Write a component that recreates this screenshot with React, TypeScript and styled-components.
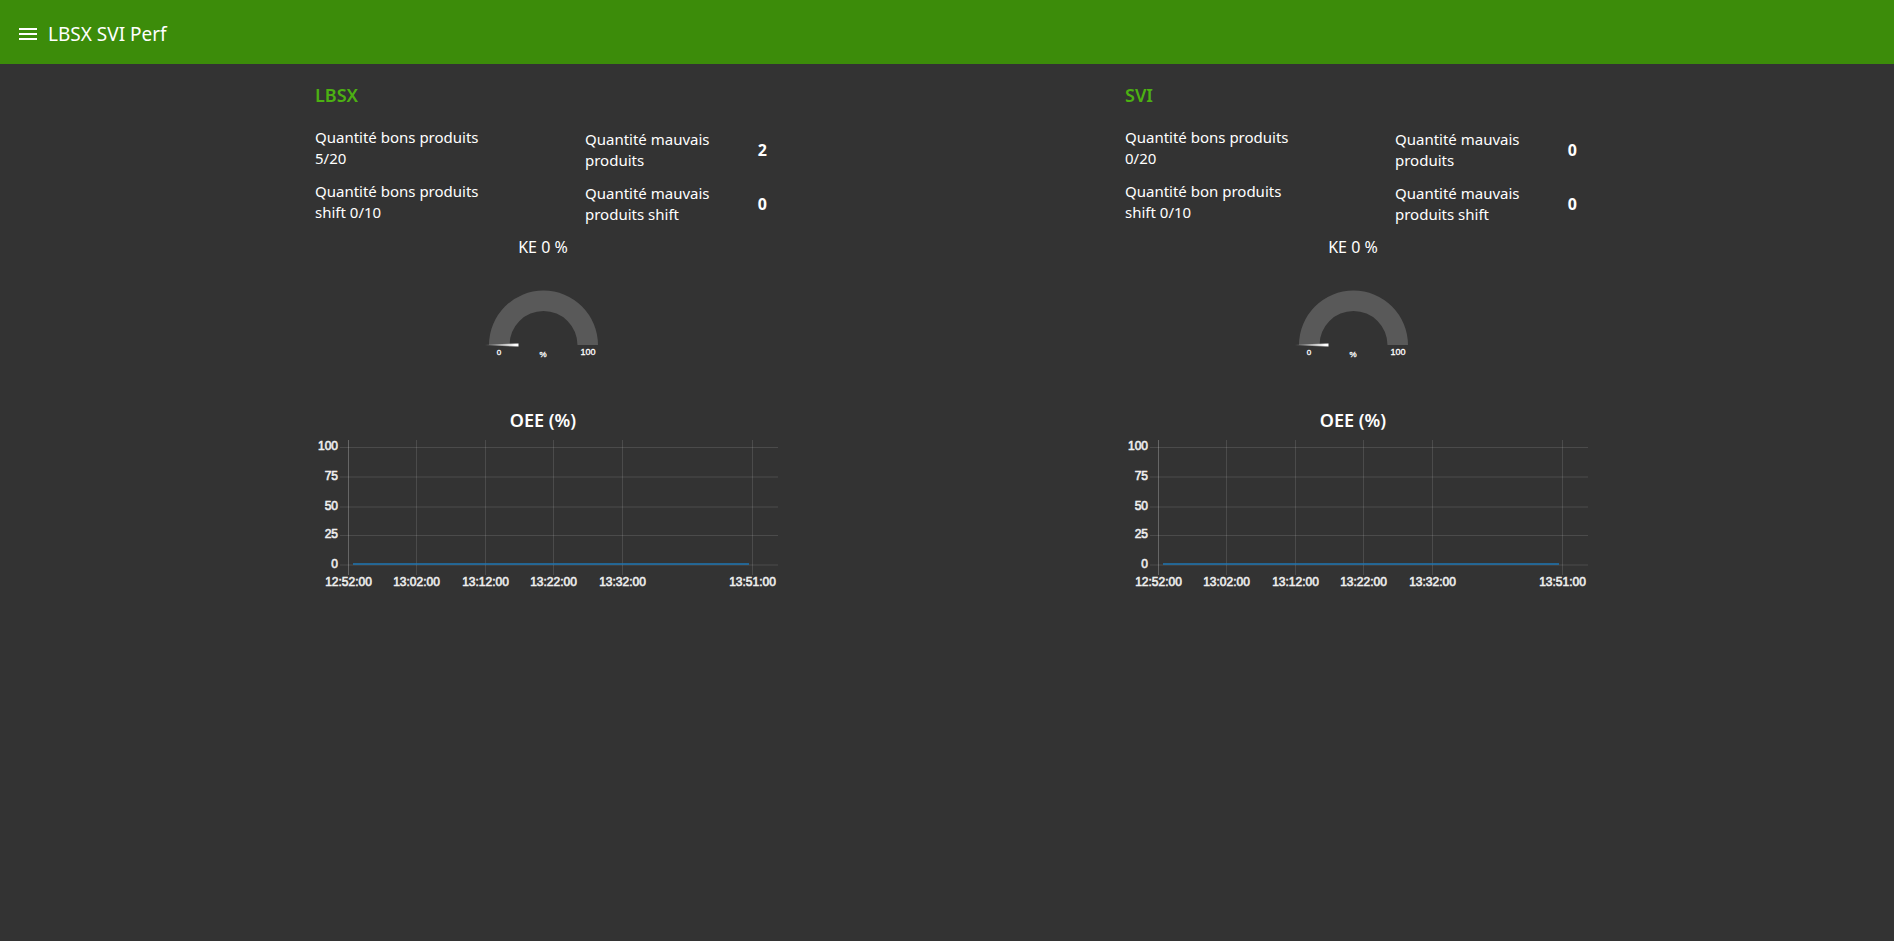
import React from "react";
import styled, { createGlobalStyle } from "styled-components";

const GlobalStyle = createGlobalStyle`
  body {
    margin: 0;
    background: #333333;
    color: #ffffff;
    font-family: "Segoe UI", "Noto Sans", "Open Sans", sans-serif;
    font-size: 15px;
    line-height: 21px;
  }
`;

const Toolbar = styled.header`
  display: flex;
  align-items: center;
  gap: 8px;
  height: 64px;
  padding: 4px 16px 0;
  box-sizing: border-box;
  background: #3c8c0a;
`;

const MenuButton = styled.button`
  display: flex;
  width: 24px;
  height: 24px;
  padding: 0;
  border: 0;
  background: none;
  color: inherit;
  cursor: pointer;
`;

const PageTitle = styled.h1`
  margin: 0;
  font-size: 19px;
  line-height: 28px;
  font-weight: 400;
`;

const Dashboard = styled.main`
  display: flex;
  flex-wrap: wrap;
  justify-content: center;
  column-gap: 340px;
  padding: 8px 0;
`;

const Group = styled.section`
  width: 470px;
  padding: 0 6px 0 8px;
  box-sizing: border-box;
`;

const GroupTitle = styled.h2`
  display: flex;
  align-items: center;
  height: 46px;
  margin: 0 0 9px;
  color: #4cb012;
  font-size: 18px;
  font-weight: 600;
`;

const Counters = styled.div`
  display: grid;
  grid-template-columns: 270px 1fr;
  grid-auto-rows: 46px;
  row-gap: 8px;
`;

const GoodCount = styled.p`
  width: 180px;
  margin: 0;
`;

const BadCount = styled.div`
  display: flex;
  align-items: center;
  justify-content: space-between;
  padding-right: 4px;
`;

const BadLabel = styled.span`
  width: 136px;
`;

const BadValue = styled.strong`
  font-size: 16px;
  font-weight: 700;
`;

const GaugeLabel = styled.p`
  margin: 8px 0 0;
  height: 24px;
  font-size: 16px;
  line-height: 24px;
  text-align: center;
`;

const GaugeDrawing = styled.svg`
  display: block;
  width: 120px;
  height: 145px;
  margin: 0 auto;
  font-family: "Liberation Sans", Arial, sans-serif;
`;

const ChartTitle = styled.h3`
  margin: 4px 0;
  font-size: 18px;
  line-height: 24px;
  font-weight: 600;
  text-align: center;
`;

const ChartDrawing = styled.svg`
  display: block;
  width: 100%;
  overflow: visible;
  font-family: "Liberation Sans", Arial, sans-serif;
  font-size: 12px;
`;

const Gauge = ({ id }: { id: string }) => (
  <GaugeDrawing viewBox="0 0 120 145" role="img" aria-label="KE 0 %">
    <defs>
      <linearGradient id={id}>
        <stop offset="0" stopColor="#fff" stopOpacity="0" />
        <stop offset="0.9" stopColor="#fff" />
      </linearGradient>
    </defs>
    <path d="M6 86 A54.5 54.5 0 0 1 115 86 H94.5 A34 34 0 0 0 26.500 86 Z" fill="#595959" />
    <path d="M2 85.500 L35.500 84.500 V87.500 L2 86.500 Z" fill={`url(#${id})`} />
    <g fill="#fff" stroke="#fff" strokeWidth="0.3" textAnchor="middle">
      <text x="16" y="96" fontSize="8">0</text>
      <text x="60" y="98" fontSize="8">%</text>
      <text x="105" y="96" fontSize="9">100</text>
    </g>
  </GaugeDrawing>
);

const yTicks = [
  { label: "100", y: 11 },
  { label: "75", y: 40.5 },
  { label: "50", y: 70.5 },
  { label: "25", y: 99 },
  { label: "0", y: 128.5 },
];

const xTicks = [
  { label: "12:52:00", x: 33.5 },
  { label: "13:02:00", x: 101.5 },
  { label: "13:12:00", x: 170.5 },
  { label: "13:22:00", x: 238.5 },
  { label: "13:32:00", x: 307.5 },
  { label: "13:51:00", x: 437.5 },
];

const Chart = () => (
  <ChartDrawing viewBox="0 0 456 156" role="img" aria-label="OEE (%)">
    <g stroke="#fff" strokeOpacity="0.12">
      {yTicks.map(({ label, y }) => (
        <line key={label} x1="25" x2="463" y1={y + 0.5} y2={y + 0.5} />
      ))}
      {xTicks.map(({ label, x }, i) => (
        <line key={label} x1={x} x2={x} y1="4" y2="139" strokeOpacity={i ? 0.12 : 0.25} />
      ))}
    </g>
    <line x1="38" x2="434" y1="128" y2="128" stroke="#1f77b4" strokeOpacity="0.75" strokeWidth="2" />
    <g fill="#eeeeee" stroke="#eeeeee" strokeWidth="0.6">
      {yTicks.map(({ label, y }) => (
        <text key={label} x="23" y={y + 3} textAnchor="end">{label}</text>
      ))}
      {xTicks.map(({ label, x }) => (
        <text key={label} x={x} y="150" textAnchor="middle">{label}</text>
      ))}
    </g>
  </ChartDrawing>
);

interface Line {
  name: string;
  good: string;
  goodShift: string;
  bad: number;
  badShift: number;
}

const lines: Line[] = [
  { name: "LBSX", good: "Quantité bons produits 5/20", goodShift: "Quantité bons produits shift 0/10", bad: 2, badShift: 0 },
  { name: "SVI", good: "Quantité bons produits 0/20", goodShift: "Quantité bon produits shift 0/10", bad: 0, badShift: 0 },
];

export default function App() {
  return (
    <>
      <GlobalStyle />
      <Toolbar>
        <MenuButton aria-label="Menu">
          <svg viewBox="0 0 24 24" width="24" height="24" fill="currentColor">
            <path d="M3 18h18v-2H3v2zm0-5h18v-2H3v2zm0-7v2h18V6H3z" />
          </svg>
        </MenuButton>
        <PageTitle>LBSX SVI Perf</PageTitle>
      </Toolbar>
      <Dashboard>
        {lines.map((line) => (
          <Group key={line.name}>
            <GroupTitle>{line.name}</GroupTitle>
            <Counters>
              <GoodCount>{line.good}</GoodCount>
              <BadCount>
                <BadLabel>Quantité mauvais produits</BadLabel>
                <BadValue>{line.bad}</BadValue>
              </BadCount>
              <GoodCount>{line.goodShift}</GoodCount>
              <BadCount>
                <BadLabel>Quantité mauvais produits shift</BadLabel>
                <BadValue>{line.badShift}</BadValue>
              </BadCount>
            </Counters>
            <GaugeLabel>KE 0 %</GaugeLabel>
            <Gauge id={`needle-${line.name}`} />
            <ChartTitle>OEE (%)</ChartTitle>
            <Chart />
          </Group>
        ))}
      </Dashboard>
    </>
  );
}
